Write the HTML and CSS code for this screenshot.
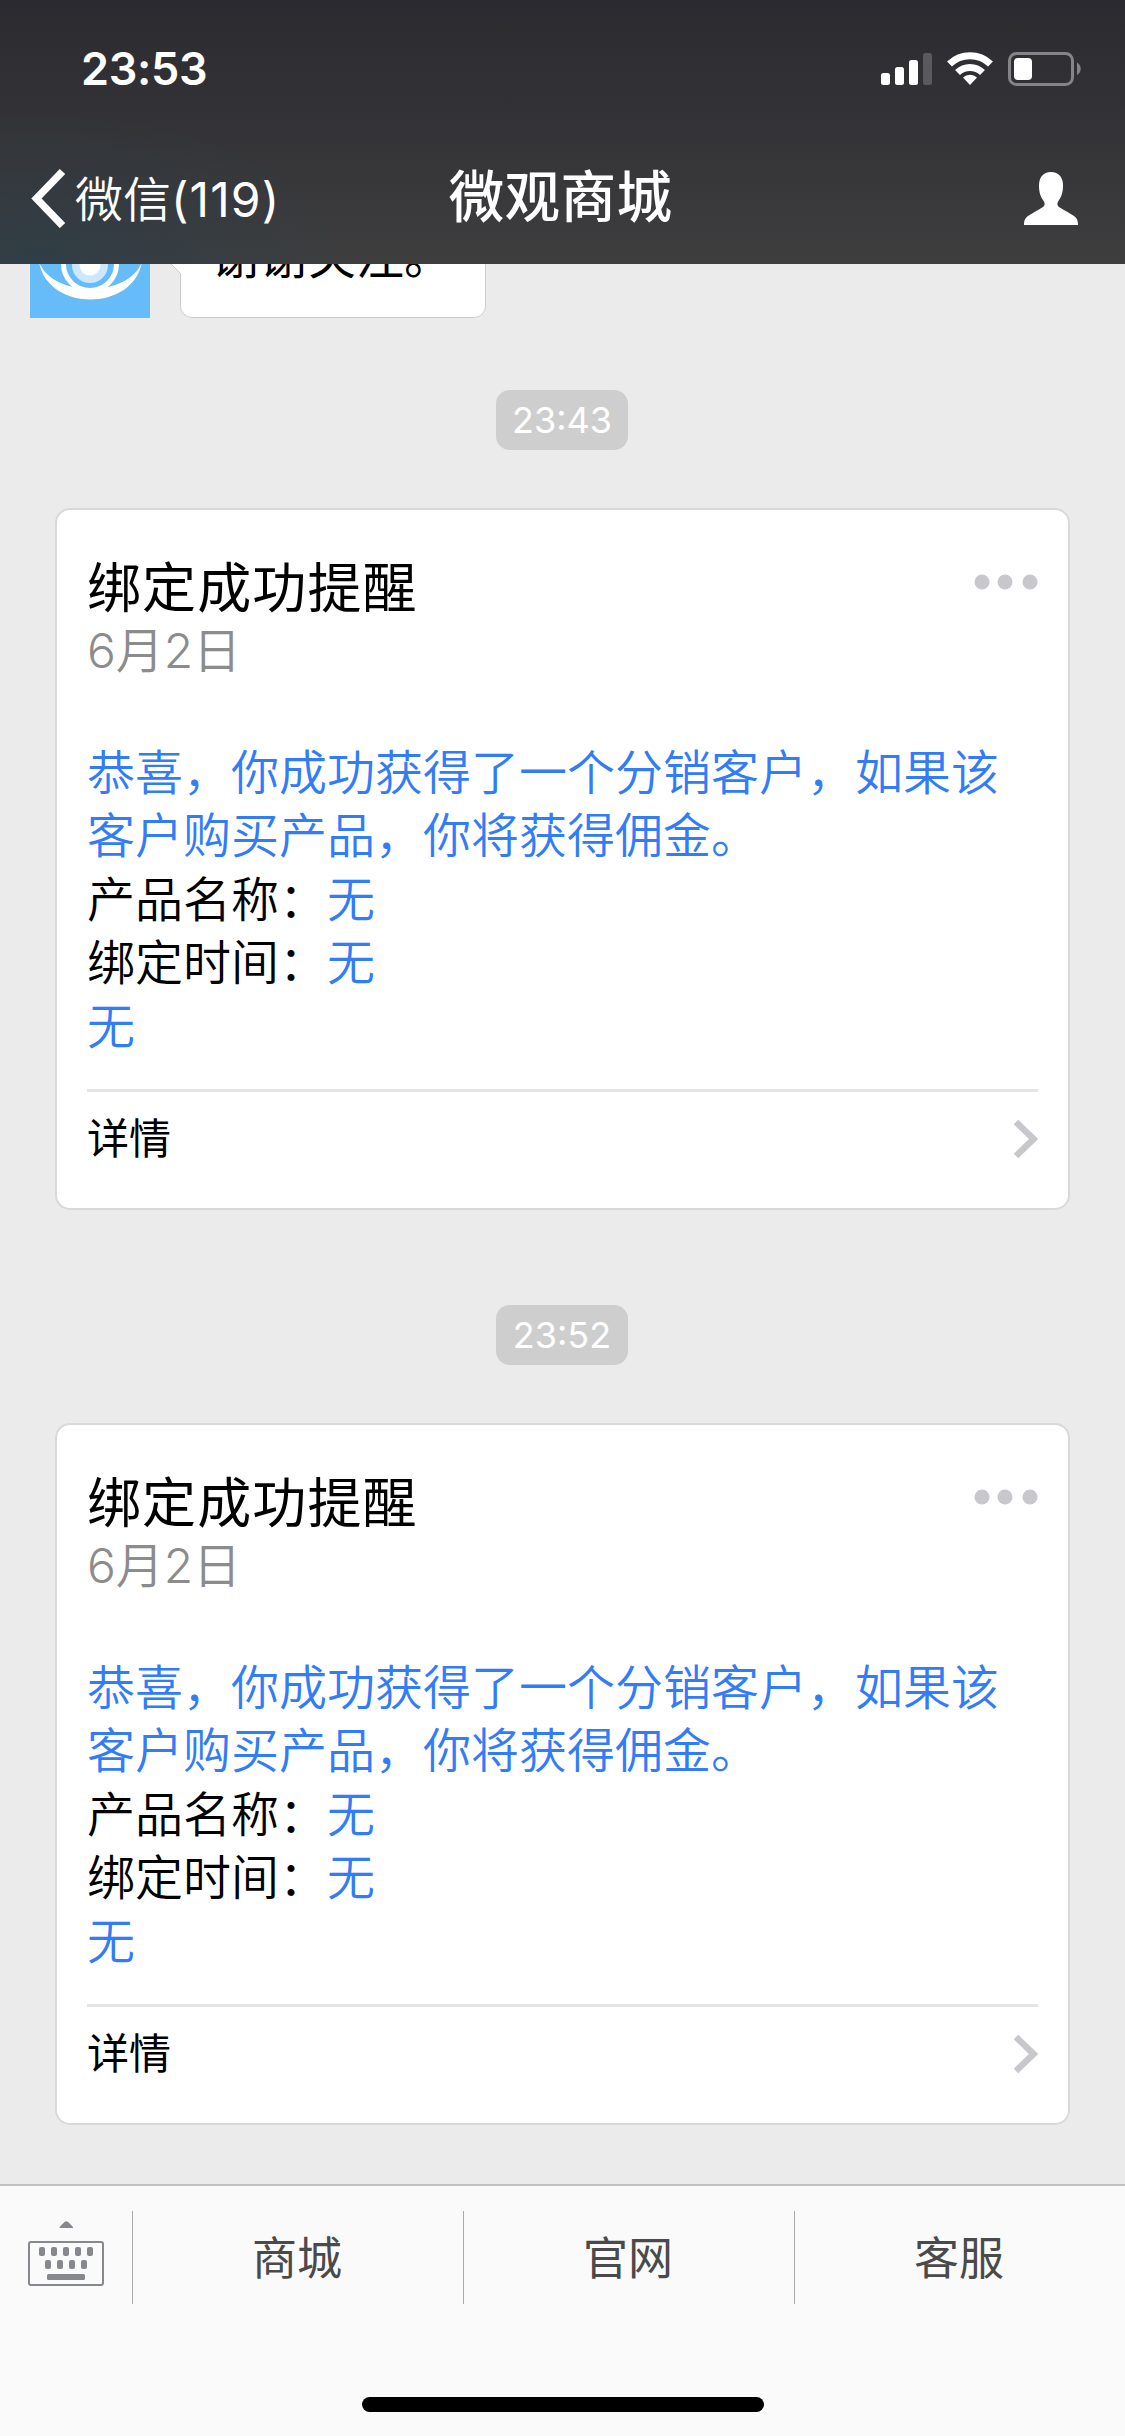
FILE: index.html
```html
<!DOCTYPE html>
<html lang="zh-CN">
<head>
<meta charset="utf-8">
<title>微观商城</title>
<link rel="stylesheet" href="styles.css">
</head>
<body>
<div class="screen">
  <header class="header">
    <div class="status">
      <span class="clock">23:53</span>
      <svg class="status-icons" width="202" height="36" viewBox="880 51 202 36">
        <g fill="#fff">
          <rect x="881" y="73" width="9" height="12" rx="2.5"/>
          <rect x="895" y="67" width="9" height="18" rx="2.5"/>
          <rect x="909" y="60" width="9" height="25" rx="2.5"/>
          <rect x="923" y="53" width="9" height="32" rx="2.5" fill="#5a595e"/>
        </g>
        <g fill="none" stroke="#fff" stroke-width="7">
          <path d="M949.5 64A29.500 29.500 0 0 1 990.500 64"/>
          <path d="M957.500 72.500A18 18 0 0 1 982.500 72.500"/>
        </g>
        <path fill="#fff" d="M970 85l-7-7.500a10 10 0 0 1 14 0z"/>
        <rect x="1009.500" y="53.500" width="63" height="31" rx="7" fill="none" stroke="#858488" stroke-width="3"/>
        <rect x="1014" y="58" width="18" height="22" rx="4" fill="#fff"/>
        <path fill="#858488" d="M1077 62.500c5 2.500 5 10 0 12.500z"/>
      </svg>
    </div>
    <nav class="nav">
      <div class="back">
        <svg width="36" height="60" viewBox="31 168 36 60"><path d="M62.500 171.500L36.500 198.500L62.500 225.500" fill="none" stroke="#fff" stroke-width="7.500"/></svg>
        <span>微信<span class="count">(119)</span></span>
      </div>
      <h1 class="title">微观商城</h1>
      <svg class="person" width="54" height="54" viewBox="1023 172 54 54"><path fill="#fff" d="M1050 172c8 0 12 5.500 12 13.500c0 7-1.500 11-4 14.500c-2 3-2 4.500-1 6c3 3 11 6.500 16 10c3.500 2.500 4 5.500 4 9h-54c0-3.500.5-6.500 4-9c5-3.500 13-7 16-10c1-1.500 1-3-1-6c-2.500-3.500-4-7.500-4-14.500c0-8 4-13.500 12-13.500z"/></svg>
    </nav>
  </header>

  <main class="chat">
    <div class="message">
      <svg class="avatar" width="120" height="120" viewBox="30 198 120 120">
        <rect x="30" y="198" width="120" height="120" fill="#66bcf8"/>
        <path fill="#fff" d="M39 262C48 312 133 312 142 262C128 298 53 298 39 262z"/>
        <circle cx="90" cy="264" r="26.500" fill="#66bcf8" stroke="#fff" stroke-width="5"/>
        <circle cx="90" cy="265" r="18" fill="#cbe8fc"/>
        <circle cx="90" cy="265" r="10.500" fill="#fff"/>
      </svg>
      <div class="bubble">谢谢关注。
        <svg class="tail" width="16" height="32" viewBox="0 0 16 32"><path d="M15 3L2 16L15 29" fill="#fff" stroke="#ccc"/></svg>
      </div>
    </div>

    <time class="stamp">23:43</time>
    <section class="card">
      <div class="card-head">
        <h2>绑定成功提醒</h2>
        <svg class="dots" width="64" height="16" viewBox="0 0 64 16" fill="#c8c7cc"><circle cx="8" cy="8" r="7.500"/><circle cx="31" cy="8" r="7.500"/><circle cx="56" cy="8" r="7.500"/></svg>
      </div>
      <p class="date">6月2日</p>
      <div class="body">
        <p class="lead">恭喜，你成功获得了一个分销客户，如果该客户购买产品，你将获得佣金。</p>
        <p>产品名称：<em>无</em></p>
        <p>绑定时间：<em>无</em></p>
        <p><em>无</em></p>
      </div>
      <a class="detail"><span>详情</span><svg width="26" height="40" viewBox="0 0 26 40"><path d="M4 3L21.500 20L4 37" fill="none" stroke="#c8c7cc" stroke-width="6.500"/></svg></a>
    </section>

    <time class="stamp">23:52</time>
    <section class="card">
      <div class="card-head">
        <h2>绑定成功提醒</h2>
        <svg class="dots" width="64" height="16" viewBox="0 0 64 16" fill="#c8c7cc"><circle cx="8" cy="8" r="7.500"/><circle cx="31" cy="8" r="7.500"/><circle cx="56" cy="8" r="7.500"/></svg>
      </div>
      <p class="date">6月2日</p>
      <div class="body">
        <p class="lead">恭喜，你成功获得了一个分销客户，如果该客户购买产品，你将获得佣金。</p>
        <p>产品名称：<em>无</em></p>
        <p>绑定时间：<em>无</em></p>
        <p><em>无</em></p>
      </div>
      <a class="detail"><span>详情</span><svg width="26" height="40" viewBox="0 0 26 40"><path d="M4 3L21.500 20L4 37" fill="none" stroke="#c8c7cc" stroke-width="6.500"/></svg></a>
    </section>
  </main>

  <footer class="toolbar">
    <div class="tabs">
      <div class="tab keyboard">
        <svg width="76" height="66" viewBox="28 2220 76 66" fill="#85888c">
          <path d="M59.500 2228q0-1 1-2l4-4q1.800-1.600 3.600 0l4 4q1 1 1 2z"/>
          <rect x="29" y="2242" width="74" height="43" rx="2" fill="none" stroke="#85888c" stroke-width="2"/>
          <rect x="39" y="2247" width="6" height="9" rx="2"/><rect x="51" y="2247" width="6" height="9" rx="2"/><rect x="63" y="2247" width="6" height="9" rx="2"/><rect x="75" y="2247" width="6" height="9" rx="2"/><rect x="87" y="2247" width="6" height="9" rx="2"/>
          <rect x="45" y="2260" width="6" height="9" rx="2"/><rect x="57" y="2260" width="6" height="9" rx="2"/><rect x="69" y="2260" width="6" height="9" rx="2"/><rect x="81" y="2260" width="6" height="9" rx="2"/>
          <rect x="47" y="2274" width="38" height="6" rx="1.500"/>
        </svg>
      </div>
      <div class="tab">商城</div>
      <div class="tab">官网</div>
      <div class="tab">客服</div>
    </div>
    <div class="home"></div>
  </footer>
</div>
</body>
</html>
```
FILE: styles.css
```css
* { box-sizing: border-box; margin: 0; padding: 0; }
body { font-family: Inter, "Noto Sans CJK SC", sans-serif; background: #ebebeb; }
svg { display: block; flex: none; }
.screen { width: 1125px; height: 2436px; display: flex; flex-direction: column; overflow: hidden; }

.header {
  position: relative; z-index: 1; flex: none; height: 264px; color: #fff;
  background:
    radial-gradient(ellipse 300px 150px at 40px 264px, rgba(40, 62, 74, .6), transparent),
    linear-gradient(#2a2a30, #3e3e3f);
}
.status { height: 132px; padding: 0 43px 0 81px; display: flex; justify-content: space-between; }
.clock { margin-top: 42px; font-size: 45px; line-height: 54px; font-weight: 600; letter-spacing: -.3px; }
.status-icons { margin-top: 51px; }
.nav { height: 132px; padding: 0 47px 0 31px; display: grid; grid-template-columns: 1fr auto 1fr; align-items: center; }
.back { display: flex; align-items: center; gap: 8px; font-size: 48px; line-height: 60px; font-weight: 350; }
.back > span { padding-top: 3px; }
.count { font-weight: 400; letter-spacing: 1.100px; }
.title { padding: 0 0 3px 12px; font-size: 55.500px; line-height: 66px; font-weight: 500; letter-spacing: .4px; }
.person { justify-self: end; margin-top: 2px; }

.chat { flex: 1; min-height: 0; display: flex; flex-direction: column; align-items: center; }
.message { align-self: stretch; display: flex; gap: 30px; margin-top: -66px; padding-left: 30px; }
.bubble {
  position: relative; width: 306px; height: 120px; padding: 28px 0 0 31px;
  border: 1px solid #ccc; border-radius: 12px; background: #fff;
  font-size: 48px; line-height: 60px; white-space: nowrap;
}
.tail { position: absolute; left: -15px; top: 46px; }
.stamp {
  width: 132px; height: 60px; margin: 72px 1px 0 0; border-radius: 14px; background: #cecece; color: #fff;
  font-size: 36px; line-height: 60px; text-align: center;
}
.card {
  width: 1015px; height: 702px; margin: 58px 0 23px; padding: 46px 30px 0;
  border: 2px solid #d9d9d9; border-radius: 15px; background: #fff;
}
.card-head { display: flex; justify-content: space-between; }
.card-head h2 { font-size: 54px; line-height: 66px; font-weight: 400; letter-spacing: 1.100px; }
.dots { margin-top: 18px; }
.date { margin-top: -2px; font-size: 48px; line-height: 62px; color: #8c8c8c; font-weight: 350; letter-spacing: -.1px; }
.body { margin-top: 59px; font-size: 48px; line-height: 63.400px; font-weight: 350; }
.body em, .lead { font-style: normal; color: #327cf7; }
.detail { margin-top: 31px; border-top: 3px solid #e5e5e5; height: 96px; display: flex; justify-content: space-between; align-items: center; font-size: 42px; }
.detail span { padding-bottom: 6px; }

.toolbar { flex: none; height: 252px; padding-top: 25px; border-top: 2px solid #c2c2c2; background: #fafafa; display: flex; flex-direction: column; align-items: center; justify-content: space-between; }
.tabs { align-self: stretch; height: 93px; display: grid; grid-template-columns: 132px 331px 331px 331px; }
.tab { display: flex; justify-content: center; align-items: center; padding: 0 2px 4px 0; font-size: 45px; color: #4a4a4a; border-left: 1px solid #aaa; }
.keyboard { align-items: flex-start; padding: 9px 0 0; border: 0; }
.home { width: 402px; height: 15px; margin-bottom: 24px; border-radius: 8px; background: #000; }
```
